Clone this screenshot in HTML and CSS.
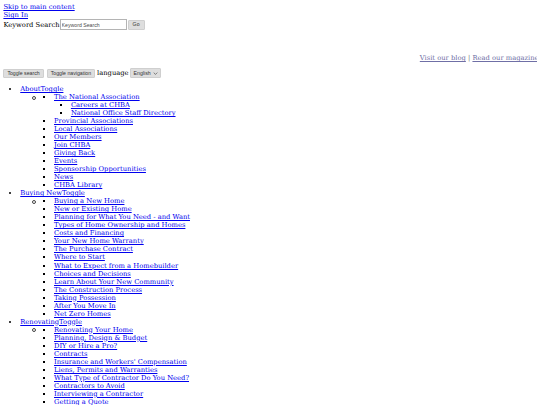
FILE: index.html
```html
<!DOCTYPE html>
<html lang="en">
<head>
<meta charset="utf-8">
<title>CHBA</title>
<link rel="stylesheet" href="styles.css">
</head>
<body>
<a class="skip" href="#main">Skip to main content</a>
<a class="signin" href="#">Sign In</a>
<form class="search">
  <label for="kw">Keyword Search</label><input id="kw" class="search-input" type="text" placeholder="Keyword Search"><button class="btn btn-go" type="button">Go</button>
</form>
<div class="logo-space"></div>
<div class="toplinks"><a class="toplink" href="#">Visit our blog</a> | <a class="toplink" href="#">Read our magazine</a></div>
<div class="controls">
  <button class="btn" type="button">Toggle search</button>
  <button class="btn" type="button">Toggle navigation</button>
  <label class="lang-label">language</label><span class="select">English <svg class="chev" viewBox="0 0 8 5" width="5" height="3"><path d="M1 1 L4 4 L7 1" fill="none" stroke="#555" stroke-width="1.2"/></svg></span>
</div>
<ul class="nav">
  <li><a href="#">AboutToggle</a>
    <ul class="sub">
      <li class="sub-item">
        <ul>
          <li><a href="#">The National Association</a>
            <ul>
              <li><a href="#">Careers at CHBA</a></li>
              <li><a href="#">National Office Staff Directory</a></li>
            </ul>
          </li>
          <li><a href="#">Provincial Associations</a></li>
          <li><a href="#">Local Associations</a></li>
          <li><a href="#">Our Members</a></li>
          <li><a href="#">Join CHBA</a></li>
          <li><a href="#">Giving Back</a></li>
          <li><a href="#">Events</a></li>
          <li><a href="#">Sponsorship Opportunities</a></li>
          <li><a href="#">News</a></li>
          <li><a href="#">CHBA Library</a></li>
        </ul>
      </li>
    </ul>
  </li>
  <li><a href="#">Buying NewToggle</a>
    <ul class="sub">
      <li class="sub-item">
        <ul>
          <li><a href="#">Buying a New Home</a></li>
          <li><a href="#">New or Existing Home</a></li>
          <li><a href="#">Planning for What You Need - and Want</a></li>
          <li><a href="#">Types of Home Ownership and Homes</a></li>
          <li><a href="#">Costs and Financing</a></li>
          <li><a href="#">Your New Home Warranty</a></li>
          <li><a href="#">The Purchase Contract</a></li>
          <li><a href="#">Where to Start</a></li>
          <li><a href="#">What to Expect from a Homebuilder</a></li>
          <li><a href="#">Choices and Decisions</a></li>
          <li><a href="#">Learn About Your New Community</a></li>
          <li><a href="#">The Construction Process</a></li>
          <li><a href="#">Taking Possession</a></li>
          <li><a href="#">After You Move In</a></li>
          <li><a href="#">Net Zero Homes</a></li>
        </ul>
      </li>
    </ul>
  </li>
  <li><a href="#">RenovatingToggle</a>
    <ul class="sub">
      <li class="sub-item">
        <ul>
          <li><a href="#">Renovating Your Home</a></li>
          <li><a href="#">Planning, Design &amp; Budget</a></li>
          <li><a href="#">DIY or Hire a Pro?</a></li>
          <li><a href="#">Contracts</a></li>
          <li><a href="#">Insurance and Workers' Compensation</a></li>
          <li><a href="#">Liens, Permits and Warranties</a></li>
          <li><a href="#">What Type of Contractor Do You Need?</a></li>
          <li><a href="#">Contractors to Avoid</a></li>
          <li><a href="#">Interviewing a Contractor</a></li>
          <li><a href="#">Getting a Quote</a></li>
        </ul>
      </li>
    </ul>
  </li>
</ul>
</body>
</html>
```
FILE: styles.css
```css
html, body {
  background: #ffffff;
}
body {
  margin: 3.375px;
  font-family: "DejaVu Serif", serif;
  font-size: 6.75px;
  line-height: 8.016px;
  color: #000000;
  overflow: hidden;
}
a {
  color: #0000ee;
  text-decoration: underline;
}
.skip, .signin {
  display: block;
}
.search {
  margin: 0;
  display: flex;
  align-items: center;
  height: 11px;
}
.search label {
  line-height: 8px;
}
.search-input {
  box-sizing: border-box;
  width: 67px;
  height: 11px;
  margin: 0;
  padding: 0 1px;
  border: 1px solid #b4b4b4;
  border-radius: 0;
  font-family: "Liberation Sans", Arial, sans-serif;
  font-size: 5.2px;
  background: #fff;
}
.search-input::placeholder {
  color: #4a4a4a;
}
.btn {
  box-sizing: border-box;
  height: 9px;
  margin: 0;
  padding: 0 3px;
  border: 1px solid #cfcfcf;
  border-radius: 1px;
  background: #dedede;
  color: #333;
  font-family: "Liberation Sans", Arial, sans-serif;
  font-size: 5.2px;
  line-height: 7px;
}
.btn-go {
  width: 17px;
  height: 10px;
  margin-left: 1px;
}
.logo-space {
  height: 24px;
}
.toplinks {
  text-align: right;
  margin-right: -2px;
  color: #777;
  line-height: 8px;
}
.toplink {
  color: #6f6fa6;
}
.controls {
  margin-top: 6px;
  display: flex;
  align-items: center;
  gap: 3px;
  height: 10px;
}
.lang-label {
  margin-left: -1px;
}
.select {
  box-sizing: border-box;
  display: inline-flex;
  align-items: center;
  gap: 2px;
  height: 10px;
  padding: 0 2px 0 3px;
  margin-left: -2px;
  border: 1px solid #cfcfcf;
  border-radius: 1px;
  background: #dedede;
  color: #333;
  font-family: "Liberation Sans", Arial, sans-serif;
  font-size: 5.2px;
}
.chev {
  display: block;
}
ul {
  margin: 0;
  padding-left: 16.875px;
}
.nav {
  margin: 6.75px 0;
  list-style-type: disc;
}
.nav ul {
  list-style-type: square;
}
.nav .sub {
  list-style: none;
}
.sub-item {
  position: relative;
}
.sub-item::before {
  content: "";
  position: absolute;
  left: -5.6px;
  top: 2.6px;
  width: 2.2px;
  height: 2.2px;
  border: 0.6px solid #444;
  border-radius: 50%;
}
```
